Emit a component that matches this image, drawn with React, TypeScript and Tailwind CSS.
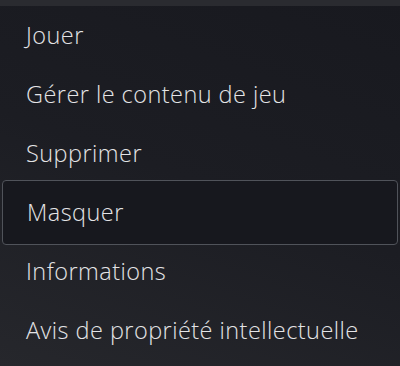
import React from "react";

const items = [
  "Jouer",
  "Gérer le contenu de jeu",
  "Supprimer",
  "Masquer",
  "Informations",
  "Avis de propriété intellectuelle",
];

export default function App() {
  return (
    <div
      className="w-[400px] h-[366px] overflow-hidden bg-[linear-gradient(200deg,#18191f_0%,#1c1d23_50%,#26272c_100%)] text-[#e4e4e6]"
      style={{ fontFamily: '"Open Sans", "Noto Sans", sans-serif' }}
    >
      <div className="h-[6px] bg-[#2a2b30]" />
      <div className="flex flex-col">
        {items.map((label) =>
          label === "Masquer" ? (
            <div
              key={label}
              className="relative z-10 mx-[2px] -my-[3px] flex h-[65px] items-center rounded-[4px] border-[1.5px] border-[#50535a] bg-[#17181e] pl-[24px] text-[23.5px] font-light leading-none tracking-[0.45px]"
            >
              {label}
            </div>
          ) : (
            <div
              key={label}
              className="flex h-[59px] items-center pl-[26px] text-[23.5px] font-light leading-none tracking-[0.45px]"
            >
              {label}
            </div>
          )
        )}
      </div>
    </div>
  );
}
